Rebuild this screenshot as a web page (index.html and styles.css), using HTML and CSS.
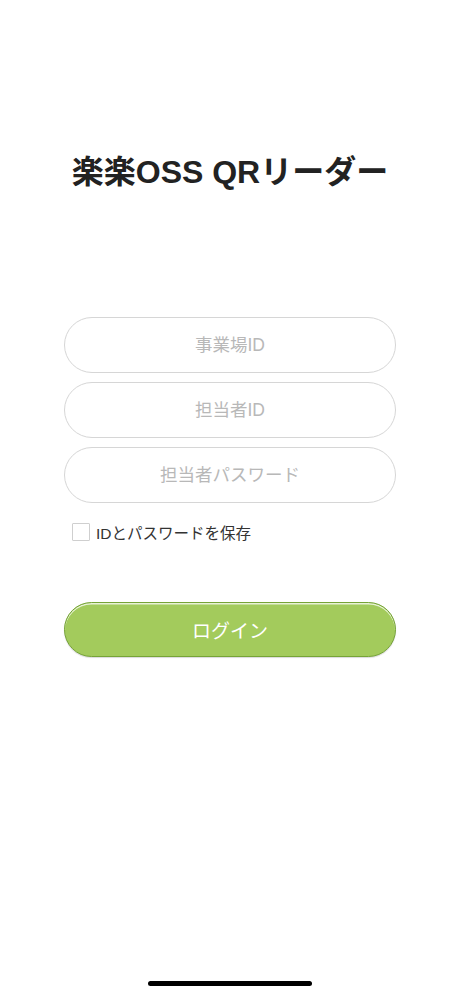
FILE: index.html
```html
<!DOCTYPE html>
<html lang="ja">
<head>
    <meta charset="UTF-8">
    <meta name="viewport" content="width=device-width, initial-scale=1.0">
    <title>楽楽OSS QRリーダー</title>
    <link rel="stylesheet" href="styles.css">
</head>
<body>
<div class="screen">
    <h1 class="title">楽楽OSS QRリーダー</h1>

    <form class="login-form">
        <input class="field" type="text" placeholder="事業場ID">
        <input class="field" type="text" placeholder="担当者ID">
        <input class="field" type="password" placeholder="担当者パスワード">

        <label class="remember">
            <span class="check-box"></span>
            <span class="remember-text">IDとパスワードを保存</span>
        </label>

        <button class="login-button" type="button">ログイン</button>
    </form>
</div>
<div class="home-indicator"></div>
</body>
</html>
```

FILE: styles.css
```css
body {
    font-family: 'Liberation Sans', 'Noto Sans CJK JP', sans-serif;
    margin: 0;
    padding: 0;
    background-color: #fff;
    color: #222;
}
.screen {
    height: 996px;
    padding: 0 64px;
    box-sizing: border-box;
}
.title {
    margin: 0;
    padding-top: 151px;
    font-size: 32px;
    line-height: 42px;
    font-weight: bold;
    text-align: center;
    color: #222;
}
.login-form {
    display: flex;
    flex-direction: column;
    margin-top: 124px;
}
.field {
    height: 56px;
    margin-bottom: 9px;
    padding: 0 24px;
    border: 1px solid #d6d6d6;
    border-radius: 28px;
    font-family: inherit;
    font-size: 17.5px;
    text-align: center;
    color: #333;
    background: #fff;
    box-sizing: border-box;
    outline: none;
}
.field::placeholder {
    color: #b8b8b8;
}
.remember {
    display: flex;
    align-items: center;
    gap: 6px;
    margin: 10px 0 0 8px;
    height: 20px;
}
.check-box {
    width: 18px;
    height: 18px;
    border: 1px solid #cfcfcf;
    border-radius: 1px;
    box-sizing: border-box;
}
.remember-text {
    font-size: 15.5px;
    color: #333;
}
.login-button {
    margin-top: 60px;
    height: 55px;
    border: 1.5px solid #76a437;
    border-radius: 28px;
    background-color: #a3cb5c;
    box-shadow: inset 0 1.5px 0 rgba(255, 255, 255, 0.75), 0 1px 1px rgba(0, 0, 0, 0.15);
    font-family: inherit;
    font-size: 19px;
    color: #fff;
}
.home-indicator {
    position: fixed;
    left: 148px;
    bottom: 10px;
    width: 164px;
    height: 5px;
    border-radius: 3px;
    background: #000;
}
```
